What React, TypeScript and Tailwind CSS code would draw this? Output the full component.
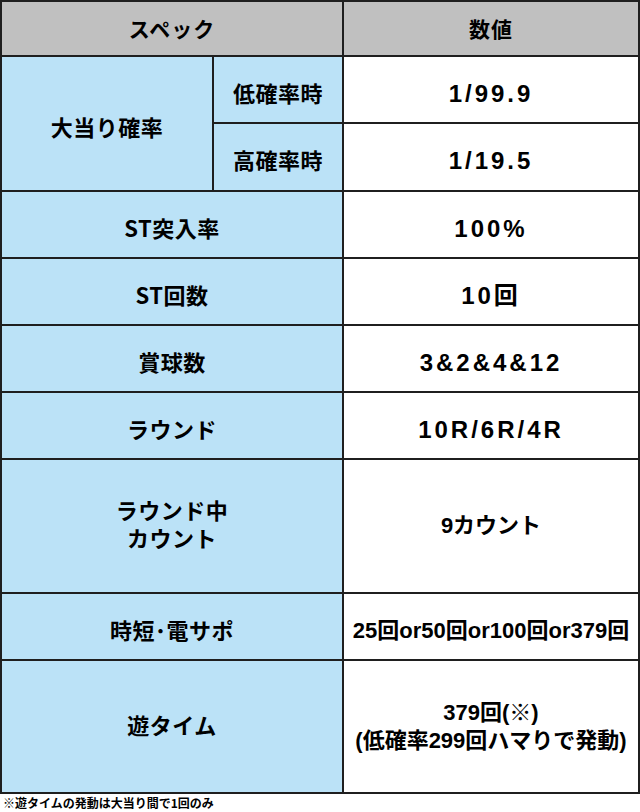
const JP = 'font-["Noto_Sans_CJK_JP",sans-serif]';
const NUM = 'font-["Liberation_Sans","Noto_Sans_CJK_JP",sans-serif]';

const ROWS: { label: string; value: string; tall?: boolean; tight?: boolean }[] = [
  { label: 'ST突入率', value: '100%' },
  { label: 'ST回数', value: '10回' },
  { label: '賞球数', value: '3&2&4&12' },
  { label: 'ラウンド', value: '10R/6R/4R' },
  { label: 'ラウンド中\nカウント', value: '9カウント', tall: true, tight: true },
  { label: '時短･電サポ', value: '25回or50回or100回or379回', tight: true },
  { label: '遊タイム', value: '379回(※)\n(低確率299回ハマりで発動)', tall: true, tight: true },
];

function Label({ text, tall, className = '' }: { text: string; tall?: boolean; className?: string }) {
  return (
    <div
      className={`flex items-center justify-center bg-[#bbe2f7] text-center text-[22px] font-bold leading-[28px] tracking-[0.5px] whitespace-pre-line text-black ${JP} ${
        tall ? 'pb-[6px]' : 'pt-1'
      } ${className}`}
    >
      {text}
    </div>
  );
}

function Value({ text, tight, tall }: { text: string; tight?: boolean; tall?: boolean }) {
  return (
    <div
      className={`flex items-center justify-center bg-white text-center font-bold whitespace-pre-line text-black ${NUM} ${
        tall ? 'pt-0' : 'pt-2'
      } ${tight ? 'text-[22px] leading-[28px] tracking-[0px]' : 'text-[24px] leading-[28px] tracking-[3px]'}`}
    >
      {text}
    </div>
  );
}

export default function App() {
  return (
    <div className="w-[640px] h-[812px] bg-white">
      <div className="grid w-[640px] grid-cols-[210px_128px_294px] grid-rows-[53px_65px_66px_65px_65px_65px_65px_132px_65px_131px] gap-[2px] bg-[#1f1f1f] p-[2px]">
        <div className={`col-span-2 flex items-center justify-center bg-[#c0c0c0] text-[21px] font-bold tracking-[1px] text-black ${JP}`}>
          スペック
        </div>
        <div className={`flex items-center justify-center bg-[#c0c0c0] text-[21px] font-bold tracking-[1px] text-black ${JP}`}>
          数値
        </div>

        <Label text="大当り確率" className="row-span-2" />
        <Label text="低確率時" />
        <Value text="1/99.9" />
        <Label text="高確率時" />
        <Value text="1/19.5" />

        {ROWS.map(r => (
          <div key={r.label} className="contents">
            <Label text={r.label} tall={r.tall} className="col-span-2" />
            <Value text={r.value} tight={r.tight} tall={r.tall} />
          </div>
        ))}
      </div>
      <p className={`px-[3px] pt-[1px] text-[12px] font-bold leading-[16px] text-black ${JP}`}>
        ※遊タイムの発動は大当り間で1回のみ
      </p>
    </div>
  );
}
